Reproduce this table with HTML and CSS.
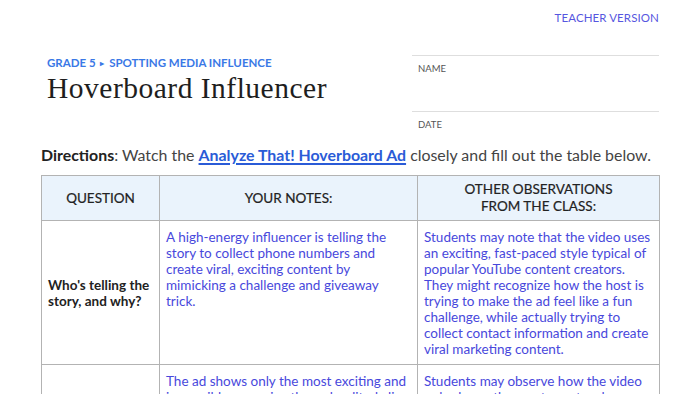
FILE: index.html
```html
<!DOCTYPE html>
<html lang="en">
<head>
<meta charset="utf-8">
<title>Hoverboard Influencer</title>
<link rel="stylesheet" href="styles.css">
</head>
<body>
<div class="page">
  <div class="teacher">TEACHER VERSION</div>
  <div class="top">
    <div class="heading">
      <div class="crumb">GRADE 5 <span class="arrow">&#9656;</span> SPOTTING MEDIA INFLUENCE</div>
      <h1 class="title">Hoverboard Influencer</h1>
    </div>
    <div class="fields">
      <div class="field field-name">NAME</div>
      <div class="field field-date">DATE</div>
    </div>
  </div>
  <p class="directions"><b>Directions</b>: Watch the <a href="#" class="link">Analyze That! Hoverboard Ad</a> closely and fill out the table below.</p>
  <table class="grid">
    <colgroup>
      <col class="c1"><col class="c2"><col class="c3">
    </colgroup>
    <thead>
      <tr>
        <th>QUESTION</th>
        <th>YOUR NOTES:</th>
        <th>OTHER OBSERVATIONS<br>FROM THE CLASS:</th>
      </tr>
    </thead>
    <tbody>
      <tr>
        <td class="q">Who's telling the story, and why?</td>
        <td class="a">A high-energy influencer is telling the story to collect phone numbers and create viral, exciting content by mimicking a challenge and giveaway trick.</td>
        <td class="a">Students may note that the video uses an exciting, fast-paced style typical of popular YouTube content creators. They might recognize how the host is trying to make the ad feel like a fun challenge, while actually trying to collect contact information and create viral marketing content.</td>
      </tr>
      <tr>
        <td class="q"></td>
        <td class="a">The ad shows only the most exciting and impossible scenarios through edited clips and special effects.</td>
        <td class="a">Students may observe how the video only shows the most spectacular moments.</td>
      </tr>
    </tbody>
  </table>
</div>
</body>
</html>
```

FILE: styles.css
```css
html, body {
  margin: 0;
  padding: 0;
  background: #ffffff;
}
body {
  font-family: Lato, "Open Sans", Arial, sans-serif;
  color: #333;
  overflow: hidden;
  height: 394px;
}
.page {
  padding: 11px 41px 0 41px;
}
.teacher {
  text-align: right;
  font-size: 11.5px;
  line-height: 14px;
  color: #5656e0;
  letter-spacing: 0.1px;
}
.top {
  display: grid;
  grid-template-columns: 1fr 247px;
  margin-top: 30px;
}
.heading {
  padding: 1px 0 0 6px;
}
.crumb {
  font-size: 11.5px;
  line-height: 14px;
  font-weight: 700;
  color: #3a78e6;
}
.arrow {
  font-size: 8px;
  vertical-align: 1px;
  margin: 0 2px;
}
.title {
  margin: 1px 0 0 0;
  font-family: "Liberation Serif", "Times New Roman", serif;
  font-weight: 400;
  font-size: 29.5px;
  line-height: 34px;
  color: #1e1e1e;
  letter-spacing: 0.5px;
}
.fields {
  display: flex;
  flex-direction: column;
}
.field {
  border-top: 1px solid #dedede;
  font-size: 9.5px;
  color: #555;
  padding: 7px 0 0 6px;
  line-height: 12px;
}
.field-name {
  height: 48px;
}
.field-date {
  height: 14px;
}
.directions {
  margin: 12px 0 0 0;
  font-size: 15.9px;
  line-height: 20px;
  color: #444;
}
.directions b {
  font-weight: 700;
  color: #222;
}
.link {
  color: #2a5bd7;
  font-weight: 700;
  text-decoration: underline;
  text-decoration-thickness: 1.5px;
  text-underline-offset: 2px;
}
.grid {
  margin-top: 10px;
  width: 618px;
  border-collapse: collapse;
  table-layout: fixed;
}
.c1 { width: 118px; }
.c2 { width: 258px; }
.c3 { width: 242px; }
.grid th, .grid td {
  border: 1px solid #b3b3b3;
}
.grid th {
  background: #eaf3fc;
  font-weight: 400;
  font-size: 13.5px;
  line-height: 17px;
  color: #222;
  height: 44px;
  padding: 0 4px;
  text-align: center;
  -webkit-text-stroke: 0.2px #222;
}
.grid td {
  font-size: 13.5px;
  line-height: 16px;
  padding: 8px 6px 7px 6px;
  vertical-align: top;
}
.grid td.q {
  vertical-align: middle;
  font-weight: 700;
  color: #222;
  padding-left: 6px;
  padding-right: 4px;
}
.grid td.a {
  color: #4848dc;
}
```
